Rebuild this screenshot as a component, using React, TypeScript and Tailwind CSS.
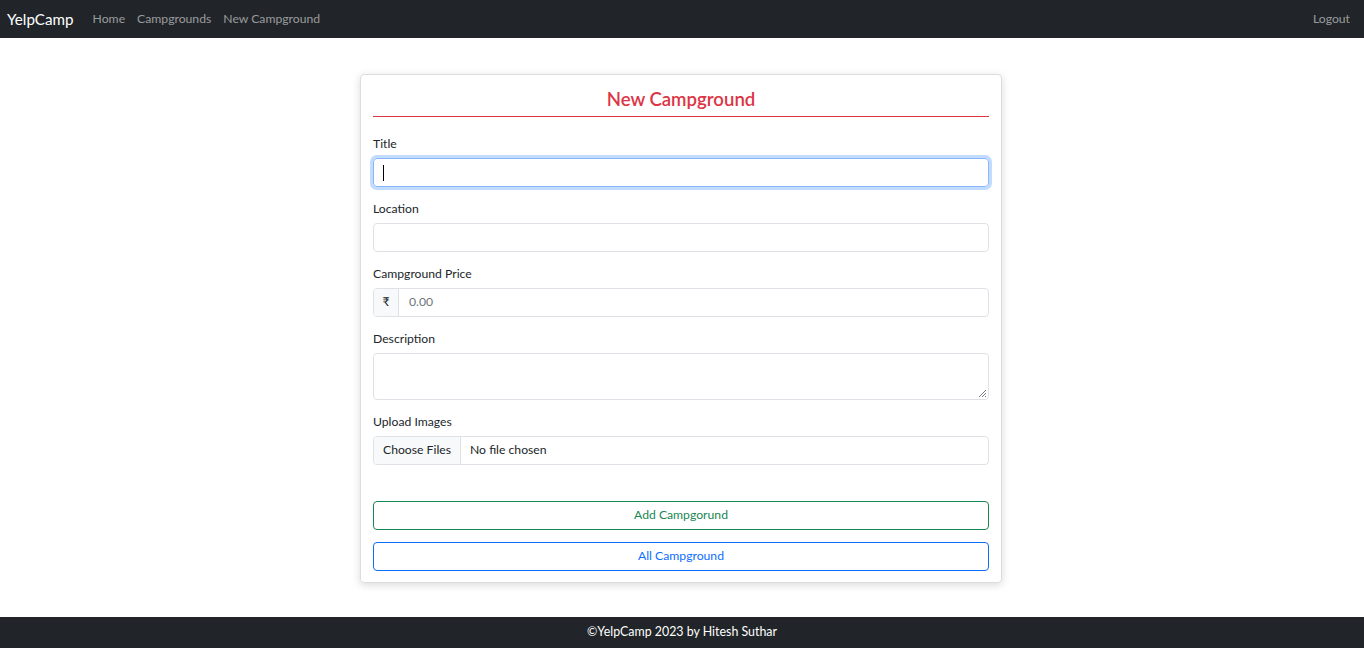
export default function App() {
  return (
    <div className="min-h-screen flex flex-col bg-white text-[#212529] font-['Lato',sans-serif] text-[12.2px]">
      <nav className="h-[38px] bg-[#212529] px-[7px] flex items-center justify-between">
        <div className="flex items-center">
          <span className="text-white text-[15.2px] mr-[19px]">YelpCamp</span>
          <div className="flex gap-[12px] text-[#ffffff8c]">
            <span>Home</span>
            <span>Campgrounds</span>
            <span>New Campground</span>
          </div>
        </div>
        <span className="text-[#ffffff8c] mr-[7px]">Logout</span>
      </nav>

      <main className="flex-grow flex justify-center pt-[36px] pb-[34px] pr-[2px]">
        <div className="w-[642px] h-[509px] border border-[#dcdcdc] rounded-[4px] shadow-[0_2px_8px_rgba(0,0,0,0.15)] px-[12px] pt-[12px]">
          <h2 className="text-center text-[#dc3545] text-[18.6px] font-semibold leading-[24px] pb-[5px]">
            New Campground
          </h2>
          <div className="h-px bg-[#dc3545]"></div>

          <div className="mt-[17px]">
            <label className="block leading-[20px] mb-[4px]">Title</label>
            <div className="h-[29px] rounded-[4px] border border-[#86b7fe] shadow-[0_0_0_3px_rgba(13,110,253,0.25)] flex items-center px-[9px]">
              <span className="w-[1px] h-[16px] bg-black"></span>
            </div>
          </div>

          <div className="mt-[12px]">
            <label className="block leading-[20px] mb-[4px]">Location</label>
            <div className="h-[29px] rounded-[4px] border border-[#dee2e6]"></div>
          </div>

          <div className="mt-[12px]">
            <label className="block leading-[20px] mb-[4px]">Campground Price</label>
            <div className="h-[29px] flex rounded-[4px] border border-[#dee2e6] overflow-hidden">
              <span className="w-[25px] bg-[#f8f9fa] border-r border-[#dee2e6] flex items-center justify-center">₹</span>
              <span className="flex items-center pl-[10px] text-[#6c757d]">0.00</span>
            </div>
          </div>

          <div className="mt-[12px]">
            <label className="block leading-[20px] mb-[4px]">Description</label>
            <div className="relative h-[47px] rounded-[4px] border border-[#dee2e6]">
              <svg className="absolute right-[1px] bottom-[1px]" width="9" height="9" viewBox="0 0 9 9">
                <path d="M8 1L1 8M8 4L4 8M8 7L7 8" stroke="#777" strokeWidth="1" />
              </svg>
            </div>
          </div>

          <div className="mt-[12px]">
            <label className="block leading-[20px] mb-[4px]">Upload Images</label>
            <div className="h-[29px] flex rounded-[4px] border border-[#dee2e6] overflow-hidden">
              <span className="bg-[#f8f9fa] border-r border-[#dee2e6] flex items-center px-[9px]">Choose Files</span>
              <span className="flex items-center pl-[9px]">No file chosen</span>
            </div>
          </div>

          <div className="mt-[36px] flex flex-col gap-[12px]">
            <button className="h-[29px] w-full rounded-[4px] border border-[#198754] text-[#198754]">Add Campgorund</button>
            <button className="h-[29px] w-full rounded-[4px] border border-[#0d6efd] text-[#0d6efd]">All Campground</button>
          </div>
        </div>
      </main>

      <footer className="h-[31px] bg-[#212529] flex items-center justify-center text-white text-[12.4px]">
        ©YelpCamp 2023 by Hitesh Suthar
      </footer>
    </div>
  );
}
